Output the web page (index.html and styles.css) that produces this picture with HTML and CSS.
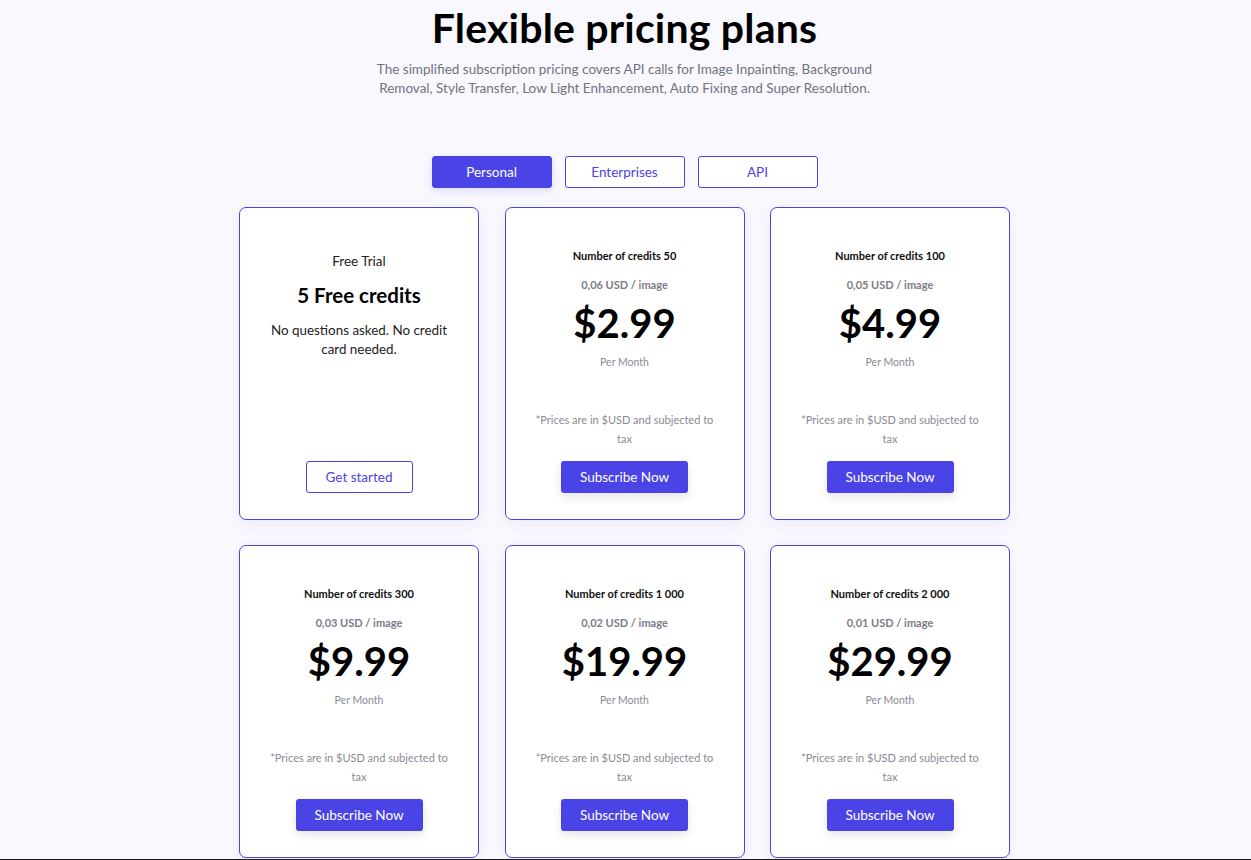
FILE: index.html
```html
<!DOCTYPE html>
<html lang="en">
<head>
<meta charset="utf-8">
<title>Flexible pricing plans</title>
<link rel="stylesheet" href="styles.css">
</head>
<body>
<main class="page">
  <header class="hero">
    <h1 class="hero-title">Flexible pricing plans</h1>
    <p class="hero-sub">The simplified subscription pricing covers API calls for Image Inpainting, Background Removal, Style Transfer, Low Light Enhancement, Auto Fixing and Super Resolution.</p>
  </header>

  <nav class="tabs">
    <button class="tab tab-active">Personal</button>
    <button class="tab">Enterprises</button>
    <button class="tab">API</button>
  </nav>

  <section class="grid">
    <article class="card card-free">
      <div class="free-label">Free Trial</div>
      <div class="free-title">5 Free credits</div>
      <div class="free-text">No questions asked. No credit card needed.</div>
      <button class="btn-outline">Get started</button>
    </article>

    <article class="card">
      <div class="credits">Number of credits 50</div>
      <div class="per-image">0,06 USD / image</div>
      <div class="price">$2.99</div>
      <div class="period">Per Month</div>
      <div class="note">*Prices are in $USD and subjected to tax</div>
      <button class="btn-primary">Subscribe Now</button>
    </article>

    <article class="card">
      <div class="credits">Number of credits 100</div>
      <div class="per-image">0,05 USD / image</div>
      <div class="price">$4.99</div>
      <div class="period">Per Month</div>
      <div class="note">*Prices are in $USD and subjected to tax</div>
      <button class="btn-primary">Subscribe Now</button>
    </article>

    <article class="card">
      <div class="credits">Number of credits 300</div>
      <div class="per-image">0,03 USD / image</div>
      <div class="price">$9.99</div>
      <div class="period">Per Month</div>
      <div class="note">*Prices are in $USD and subjected to tax</div>
      <button class="btn-primary">Subscribe Now</button>
    </article>

    <article class="card">
      <div class="credits">Number of credits 1 000</div>
      <div class="per-image">0,02 USD / image</div>
      <div class="price">$19.99</div>
      <div class="period">Per Month</div>
      <div class="note">*Prices are in $USD and subjected to tax</div>
      <button class="btn-primary">Subscribe Now</button>
    </article>

    <article class="card">
      <div class="credits">Number of credits 2 000</div>
      <div class="per-image">0,01 USD / image</div>
      <div class="price">$29.99</div>
      <div class="period">Per Month</div>
      <div class="note">*Prices are in $USD and subjected to tax</div>
      <button class="btn-primary">Subscribe Now</button>
    </article>
  </section>
  <div class="footer-edge"></div>
</main>
</body>
</html>
```

FILE: styles.css
```css
* { box-sizing: border-box; }

html, body {
  margin: 0;
  padding: 0;
  background: #f8f8fe;
  font-family: Lato, "Open Sans", Arial, sans-serif;
  color: #111;
}

.page {
  display: flex;
  flex-direction: column;
  align-items: center;
  padding: 4px 2px 0 0;
}

.hero {
  display: flex;
  flex-direction: column;
  align-items: center;
  text-align: center;
}

.hero-title {
  margin: 0;
  font-size: 41px;
  line-height: 48px;
  font-weight: 700;
  color: #000;
  letter-spacing: 0.2px;
}

.hero-sub {
  margin: 8px 0 0;
  width: 510px;
  font-size: 13.5px;
  line-height: 19px;
  color: #737380;
}

.tabs {
  display: flex;
  gap: 13px;
  margin-top: 58px;
}

.tab {
  width: 120px;
  height: 32px;
  border: 1px solid #4a43e6;
  border-radius: 3px;
  background: #fff;
  color: #4a43e6;
  font-family: inherit;
  font-size: 13.5px;
  padding: 0;
  cursor: pointer;
}

.tab-active {
  background: #4a43e6;
  color: #fff;
  box-shadow: 0 3px 8px rgba(74, 67, 230, 0.15);
}

.grid {
  display: grid;
  grid-template-columns: repeat(3, 240px);
  column-gap: 25.5px;
  row-gap: 25px;
  margin-top: 19px;
}

.card {
  height: 313px;
  background: #fff;
  border: 1px solid #4a43e6;
  border-radius: 7px;
  box-shadow: 0 4px 14px rgba(74, 67, 230, 0.06);
  display: flex;
  flex-direction: column;
  align-items: center;
  text-align: center;
  padding: 40px 20px 26px;
}

.card-free { padding-top: 44px; }

.free-label {
  font-size: 13.5px;
  line-height: 18px;
  color: #222;
}

.free-title {
  margin-top: 14px;
  font-size: 20.5px;
  line-height: 22px;
  font-weight: 700;
  color: #000;
}

.free-text {
  margin-top: 15px;
  width: 190px;
  font-size: 13.4px;
  line-height: 19px;
  color: #222;
}

.credits {
  font-size: 11px;
  line-height: 16px;
  font-weight: 700;
  color: #111;
}

.per-image {
  margin-top: 13px;
  font-size: 11px;
  line-height: 16px;
  font-weight: 700;
  color: #7c7c86;
}

.price {
  margin-top: 7px;
  font-size: 40px;
  line-height: 46px;
  font-weight: 700;
  color: #000;
}

.period {
  margin-top: 8px;
  font-size: 10.5px;
  line-height: 16px;
  color: #8a8a94;
}

.note {
  margin-top: auto;
  width: 182px;
  font-size: 11px;
  line-height: 19px;
  color: #8a8a94;
}

.btn-primary {
  margin-top: 13px;
  width: 127px;
  height: 32px;
  border: 0;
  border-radius: 3px;
  background: #4a43e6;
  color: #fff;
  font-family: inherit;
  font-size: 13.5px;
  padding: 0;
  box-shadow: 0 4px 10px rgba(40, 40, 80, 0.12);
  cursor: pointer;
}

.btn-outline {
  margin-top: auto;
  width: 107px;
  height: 32px;
  border: 1px solid #4a43e6;
  border-radius: 3px;
  background: #fff;
  color: #4a43e6;
  font-family: inherit;
  font-size: 13.5px;
  padding: 0;
  cursor: pointer;
}

.footer-edge {
  align-self: stretch;
  height: 40px;
  margin: 1px -2px 0 0;
  background: #1a1a1a;
}
```
